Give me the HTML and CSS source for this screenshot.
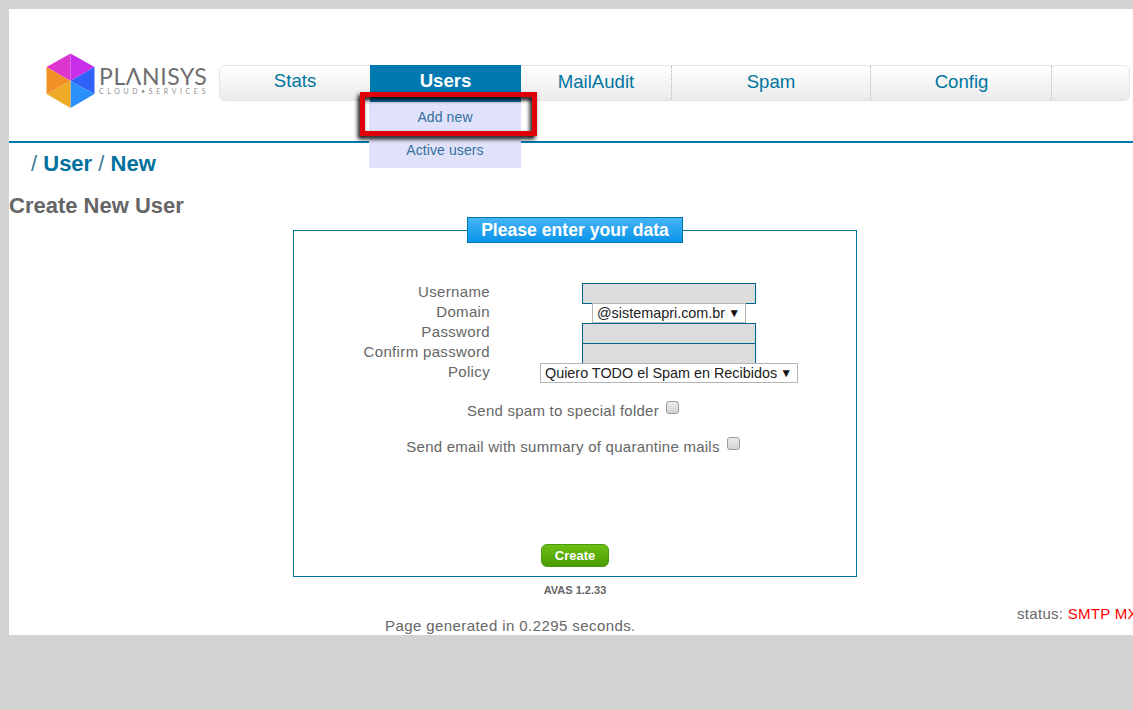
FILE: index.html
```html
<!DOCTYPE html>
<html lang="en">
<head>
<meta charset="utf-8">
<title>Create New User</title>
<link rel="stylesheet" href="styles.css">
</head>
<body>
<div class="sheet">
  <header class="top">
    <div class="logo">
      <svg class="hex" width="50" height="56" viewBox="0 0 50 56" aria-hidden="true">
        <polygon points="24.500,0.500 24.500,28 0.500,14" fill="#dd36cf"/>
        <polygon points="24.500,0.500 48.500,14 24.500,28" fill="#c82de9"/>
        <polygon points="48.500,14 48.500,41 24.500,28" fill="#2f62f6"/>
        <polygon points="48.500,41 24.500,55 24.500,28" fill="#2b90fb"/>
        <polygon points="24.500,55 0.500,41 24.500,28" fill="#eeaa26"/>
        <polygon points="0.500,41 0.500,14 24.500,28" fill="#f09026"/>
      </svg>
      <div class="wordmark">
        <div class="brand" aria-label="PLANISYS">PLΛNISYS</div>
        <div class="tag">CLOUD•SERVICES</div>
      </div>
    </div>
    <nav class="nav">
      <a class="nav-item w-stats">Stats</a>
      <a class="nav-item w-users active">Users</a>
      <a class="nav-item w-mail">MailAudit</a>
      <a class="nav-item w-spam">Spam</a>
      <a class="nav-item w-config">Config</a>
      <span class="nav-item w-rest"></span>
      <div class="submenu">
        <a class="sub-item">Add new</a>
        <a class="sub-item">Active users</a>
      </div>
      <div class="callout"></div>
    </nav>
  </header>
  <div class="crumbs"><span class="sep">/</span> <b>User</b> <span class="sep">/</span> <b>New</b></div>
  <h1 class="title">Create New User</h1>
  <fieldset class="panel">
    <legend class="panel-title">Please enter your data</legend>
    <div class="grid">
      <label class="lbl">Username</label><div class="ctl"><span class="field"></span></div>
      <label class="lbl">Domain</label><div class="ctl"><span class="pick">@sistemapri.com.br<i class="arrow">▼</i></span></div>
      <label class="lbl">Password</label><div class="ctl"><span class="field"></span></div>
      <label class="lbl">Confirm password</label><div class="ctl"><span class="field"></span></div>
      <label class="lbl">Policy</label><div class="ctl"><span class="pick">Quiero TODO el Spam en Recibidos<i class="arrow">▼</i></span></div>
    </div>
    <div class="check one">Send spam to special folder<span class="box"></span></div>
    <div class="check two">Send email with summary of quarantine mails<span class="box"></span></div>
    <div class="actions"><span class="btn">Create</span></div>
  </fieldset>
  <div class="version">AVAS 1.2.33</div>
  <div class="foot">
    <div class="generated">Page generated in 0.2295 seconds.</div>
    <div class="status">status: <span class="bad">SMTP MX</span></div>
  </div>
</div>
</body>
</html>
```
FILE: styles.css
```css
* { box-sizing: border-box; }
html, body { margin: 0; height: 100%; overflow: hidden; }
body {
  background: #d3d3d3;
  padding: 9px 0 0 9px;
  font-family: "Liberation Sans", Arial, sans-serif;
  color: #666;
}
.sheet {
  background: #fff;
  width: 1124px;
  height: 626px;
  overflow: hidden;
  display: flex;
  flex-direction: column;
}
.top {
  height: 134px;
  flex: none;
  border-bottom: 2px solid #0079b0;
  padding: 44px 0 0 37px;
  display: flex;
  align-items: flex-start;
}
.logo { width: 173px; flex: none; display: flex; align-items: flex-start; }
.hex { flex: none; display: block; }
.wordmark { margin: 13px 0 0 3px; color: #6e6e70; }
.brand { font: 400 23px/21px Lato, sans-serif; letter-spacing: 0.6px; white-space: nowrap; }
.tag { font: 400 7px/8px Lato, sans-serif; letter-spacing: 3.6px; white-space: nowrap; color: #8f8f91; }
.nav {
  position: relative;
  margin-top: 12px;
  width: 911px;
  height: 36px;
  flex: none;
  display: flex;
  border: 1px solid #e4e4e4;
  border-radius: 6px;
  background: linear-gradient(#fff, #ebebeb);
}
.nav-item {
  display: block;
  font-size: 18.600px;
  line-height: 29px;
  height: 34px;
  text-align: center;
  color: #00759f;
  border-right: 1px dotted #b5b5b5;
  flex: none;
}
.w-stats { width: 150px; border-right: 0; }
.w-users { width: 151px; border-right: 0; }
.w-mail { width: 151px; line-height: 32px; }
.w-spam { width: 199px; line-height: 32px; }
.w-config { width: 181px; line-height: 32px; padding-left: 1px; }
.w-rest { flex: 1; border-right: 0; }
.active {
  background: #0079b0;
  color: #fff;
  font-weight: bold;
  height: 37px;
  margin-top: -1px;
  line-height: 32px;
}
.submenu {
  position: absolute;
  left: 149px;
  top: 36px;
  width: 152px;
  background: #e0e2fb;
}
.sub-item {
  display: block;
  height: 33px;
  font-size: 14px;
  line-height: 31px;
  letter-spacing: 0.1px;
  text-align: center;
  color: #35709c;
}
.callout {
  position: absolute;
  left: 140px;
  top: 26px;
  width: 177px;
  height: 44px;
  border: 5px solid #e0000a;
  filter: drop-shadow(-2px 3px 2px #000);
}
.crumbs {
  margin: 8px 0 0 22px;
  font-size: 22px;
  line-height: 26px;
  color: #00709d;
}
.crumbs b { color: #00709d; }
.sep { color: #3b7a98; }
.title {
  margin: 16px 0 0;
  font-size: 22px;
  line-height: 26px;
  font-weight: bold;
  color: #666;
}
.panel {
  width: 564px;
  height: 360px;
  margin: -2px 0 0 284px;
  padding: 0;
  border: 1px solid #00759a;
  flex: none;
  min-width: 0;
}
.panel-title {
  margin: 0 auto;
  padding: 0;
  width: 216px;
  height: 26px;
  border: 1px solid #0079a8;
  background: linear-gradient(#45b4f7, #0a94e8);
  color: #fff;
  font-size: 17.600px;
  font-weight: bold;
  line-height: 24px;
  text-align: center;
}
.grid {
  display: grid;
  grid-template-columns: 196px 358px;
  grid-auto-rows: 20px;
  margin-top: 40px;
  font-size: 15px;
  line-height: 18px;
  letter-spacing: 0.35px;
}
.lbl { text-align: right; }
.ctl { display: flex; justify-content: center; letter-spacing: 0; }
.field {
  display: block;
  width: 174px;
  height: 21px;
  background: #dcdcdc;
  border: 1px solid #00638a;
}
.pick {
  display: block;
  position: relative;
  z-index: 1;
  height: 20px;
  background: #fff;
  border: 1px solid #b4b4b4;
  padding: 0 5px 0 4px;
  color: #222;
  font-size: 14.400px;
  line-height: 19px;
  white-space: nowrap;
}
.arrow { font-style: normal; font-size: 12px; margin-left: 3px; vertical-align: 1px; color: #111; }
.check {
  text-align: center;
  font-size: 15px;
  line-height: 18px;
  letter-spacing: 0.25px;
  padding-right: 4px;
}
.one { margin-top: 18px; }
.two { margin-top: 17px; }
.box {
  display: inline-block;
  width: 13px;
  height: 13px;
  margin-left: 7px;
  vertical-align: 2px;
  border: 1px solid #9c9c9c;
  border-radius: 3px;
  background: linear-gradient(#ececec, #d2d2d2);
}
.actions { margin-top: 88px; display: flex; justify-content: center; }
.btn {
  display: block;
  width: 68px;
  height: 23px;
  border-radius: 6px;
  border: 1px solid #4a9a10;
  background: linear-gradient(#6cc012, #4a9c02);
  color: #fff;
  font-size: 13px;
  font-weight: bold;
  line-height: 21px;
  text-align: center;
}
.version {
  margin: 7px 0 0 284px;
  width: 564px;
  text-align: center;
  font-size: 11px;
  line-height: 13px;
  font-weight: bold;
  color: #666;
}
.foot { position: relative; flex: 1; }
.generated {
  margin: 20px 0 0 376px;
  font-size: 15px;
  line-height: 18px;
  letter-spacing: 0.42px;
  white-space: nowrap;
}
.status {
  position: absolute;
  left: 1008px;
  top: 8px;
  font-size: 15px;
  line-height: 18px;
  letter-spacing: 0.3px;
  white-space: nowrap;
}
.bad { color: #f00; }
```
